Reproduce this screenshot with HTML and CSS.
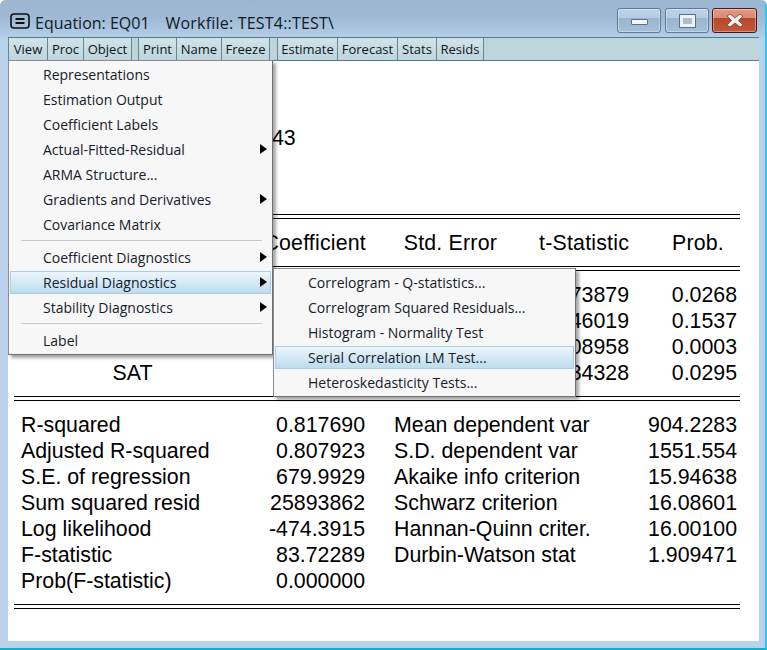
FILE: index.html
```html
<!DOCTYPE html>
<html lang="en">
<head>
<meta charset="utf-8">
<title>Equation: EQ01</title>
<link rel="stylesheet" href="styles.css">
</head>
<body>
<div class="window">
  <header class="titlebar">
    <span class="sysbtn"><svg width="20" height="16" viewBox="0 0 20 16"><rect x="1" y="1" width="18" height="14" rx="3" fill="none" stroke="#111" stroke-width="1.6"/><path d="M5.500 6h9M5.500 10h9" stroke="#111" stroke-width="2"/></svg></span>
    <span class="title">Equation: EQ01</span>
    <span class="title title-wf">Workfile: TEST4::TEST\</span>
    <div class="winbtns">
      <span class="winbtn"><span class="glyph-min"></span></span>
      <span class="winbtn"><span class="glyph-max"></span></span>
      <span class="winbtn winbtn-close"><svg width="18" height="15" viewBox="0 0 18 15"><path d="M1 3 4 1 9 5 14 1 17 3 12.500 7.500 17 12 14 14 9 10 4 14 1 12 5.500 7.500z" fill="#f4f0ee" stroke="#7d4035" stroke-width="0.8"/></svg></span>
    </div>
  </header>
  <nav class="toolbar">
    <div class="tbgroup tbgroup-view"><span class="tb">View</span><span class="tb">Proc</span><span class="tb">Object</span></div>
    <div class="tbgroup tbgroup-print"><span class="tb">Print</span><span class="tb">Name</span><span class="tb">Freeze</span></div>
    <div class="tbgroup tbgroup-est"><span class="tb">Estimate</span><span class="tb">Forecast</span><span class="tb">Stats</span><span class="tb">Resids</span></div>
  </nav>
  <main class="content">
    <p class="obs">43</p>
    <div class="rule-double rule-top"></div>
    <div class="coef-grid coef-head">
      <span></span><span>Coefficient</span><span>Std. Error</span><span>t-Statistic</span><span class="prob-head">Prob.</span>
    </div>
    <div class="rule-double"></div>
    <div class="coef-grid coef-body">
      <span></span><span></span><span></span><span>2.273879</span><span>0.0268</span>
      <span></span><span></span><span></span><span>1.446019</span><span>0.1537</span>
      <span></span><span></span><span></span><span>3.908958</span><span>0.0003</span>
      <span class="var">SAT</span><span></span><span></span><span>2.234328</span><span>0.0295</span>
    </div>
    <div class="rule-double rule-mid"></div>
    <div class="stats">
      <span>R-squared</span><span>0.817690</span><span>Mean dependent var</span><span>904.2283</span>
      <span>Adjusted R-squared</span><span>0.807923</span><span>S.D. dependent var</span><span>1551.554</span>
      <span>S.E. of regression</span><span>679.9929</span><span>Akaike info criterion</span><span>15.94638</span>
      <span>Sum squared resid</span><span>25893862</span><span>Schwarz criterion</span><span>16.08601</span>
      <span>Log likelihood</span><span>-474.3915</span><span>Hannan-Quinn criter.</span><span>16.00100</span>
      <span>F-statistic</span><span>83.72289</span><span>Durbin-Watson stat</span><span>1.909471</span>
      <span>Prob(F-statistic)</span><span>0.000000</span><span></span><span></span>
    </div>
    <div class="rule-double rule-end"></div>
  </main>

  <div class="menu menu-view">
    <div class="mi">Representations</div>
    <div class="mi">Estimation Output</div>
    <div class="mi">Coefficient Labels</div>
    <div class="mi has-sub">Actual-Fitted-Residual</div>
    <div class="mi">ARMA Structure...</div>
    <div class="mi has-sub">Gradients and Derivatives</div>
    <div class="mi">Covariance Matrix</div>
    <div class="msep"></div>
    <div class="mi has-sub">Coefficient Diagnostics</div>
    <div class="mi has-sub mi-active">Residual Diagnostics</div>
    <div class="mi has-sub">Stability Diagnostics</div>
    <div class="msep"></div>
    <div class="mi">Label</div>
  </div>
  <div class="menu menu-sub">
    <div class="mi">Correlogram - Q-statistics...</div>
    <div class="mi">Correlogram Squared Residuals...</div>
    <div class="mi">Histogram - Normality Test</div>
    <div class="mi mi-active">Serial Correlation LM Test...</div>
    <div class="mi">Heteroskedasticity Tests...</div>
  </div>
</div>
</body>
</html>
```
FILE: styles.css
```css
* { box-sizing: border-box; }
html, body { margin: 0; padding: 0; background: #fff; }
body { width: 767px; height: 650px; overflow: hidden; }

.window {
  position: relative;
  width: 767px;
  height: 650px;
  background: #b9d1ea;
  border-radius: 6px 6px 0 0;
  border-right: 2px solid #35c3e6;
  border-bottom: 2px solid #1fa9c9;
  padding: 0 6px 7px 8px;
  display: flex;
  flex-direction: column;
  font-family: "Open Sans", "Noto Sans", sans-serif;
}

.titlebar {
  margin: 0 -6px 0 -8px;
  height: 37px;
  padding: 13px 8px 0 10px;
  display: flex;
  align-items: flex-start;
  background: linear-gradient(#9cb5d0 0, #a0b9d4 50%, #b4cde8 100%);
  border-radius: 6px 6px 0 0;
  color: #0d1a26;
  font-size: 16px;
  line-height: 20px;
  flex: none;
}
.sysbtn { width: 20px; height: 16px; margin-right: 5px; display: block; }
.sysbtn svg { display: block; }
.title-wf { margin-left: 16px; letter-spacing: 0.2px; }

.winbtns { margin: -5px 0 0 auto; display: flex; gap: 4px; }
.winbtn {
  width: 44px;
  height: 25px;
  border: 1px solid #5e7a96;
  border-radius: 3px;
  display: flex;
  align-items: center;
  justify-content: center;
  background: linear-gradient(#bdd2e8 0, #b5cce4 38%, #9bb5cf 40%, #a6bfd9 100%);
  box-shadow: inset 0 0 0 1px rgba(255, 255, 255, 0.35);
}
.winbtn-close {
  width: 45px;
  margin-left: -1px;
  border-color: #4a1a1a;
  background: linear-gradient(#e39a86 0, #d98a75 38%, #b9472a 40%, #c5583a 100%);
}
.glyph-min {
  width: 17px;
  height: 6px;
  margin-top: 3px;
  background: #f3f5f8;
  border: 1px solid #5a6f88;
  border-radius: 1px;
}
.glyph-max {
  width: 15px;
  height: 12px;
  background: #a9bdd4;
  border: 3px solid #eef2f6;
  outline: 1px solid #5a6f88;
}

.toolbar {
  height: 24px;
  display: flex;
  gap: 6px;
  background: #bfd5dc;
  border-top: 1px solid #4f7b8c;
  border-bottom: 1px solid #4f7b8c;
  flex: none;
}
.tbgroup { display: grid; }
.tbgroup-view { grid-template-columns: 39px 36px 49px; }
.tbgroup-print { grid-template-columns: 38px 45px 49px; }
.tbgroup-est { grid-template-columns: 60px 60px 39px 48px; margin-left: 1px; }
.tb {
  height: 22px;
  border-left: 1px solid #5f8796;
  font-size: 13px;
  line-height: 22px;
  text-align: center;
  color: #0a1720;
  background: linear-gradient(#d2e3e8, #bfd5dc);
}
.tb:last-child { border-right: 1px solid #5f8796; }

.content {
  flex: 1;
  background: #fff;
  padding: 0 19px 0 6px;
  color: #000;
  font-family: "Liberation Sans", Arial, sans-serif;
  font-size: 21.33px;
  line-height: 26px;
}
.obs { margin: 64px 0 0; padding-left: 258px; }
.rule-double {
  height: 5px;
  border-top: 1px solid #000;
  border-bottom: 1px solid #000;
}
.rule-top { margin-top: 63px; }
.rule-mid { margin-top: 10px; }
.rule-end { margin-top: 10px; }

.coef-grid {
  display: grid;
  grid-template-columns: 224px 128px 131px 132px 108px;
  text-align: right;
}
.coef-head { padding: 11px 0 10px; letter-spacing: 0.2px; }
.prob-head { padding-right: 13px; }
.coef-body { padding-top: 11px; }
.var { text-align: center; padding-left: 13px; }

.stats {
  display: grid;
  grid-template-columns: 202px 142px 260px 112px;
  padding: 11px 0 0 7px;
}
.stats span:nth-child(even) { text-align: right; }
.stats span:nth-child(4n+3) { padding-left: 29px; }

.menu {
  position: absolute;
  background: #f7f7f7;
  border: 1px solid #8c8c8c;
  border-right-color: #6f6f6f;
  border-bottom-color: #6f6f6f;
  box-shadow: 3px 3px 3px rgba(0, 0, 0, 0.35);
  color: #15202b;
  font-size: 14px;
  padding: 1px;
}
.menu-view { left: 8px; top: 60px; width: 265px; height: 295px; }
.menu-sub { left: 273px; top: 268px; width: 303px; height: 129px; }
.mi {
  position: relative;
  height: 25px;
  line-height: 23px;
  padding-left: 32px;
  white-space: nowrap;
  border: 1px solid transparent;
}
.mi-active {
  height: 23px;
  line-height: 21px;
  margin: 1px 0;
  background: linear-gradient(#ecf6fc, #bddcee);
  border-color: #a9cfe3;
}
.has-sub::after {
  content: "";
  position: absolute;
  right: 3px;
  top: 6px;
  border-left: 7px solid #000;
  border-top: 5px solid transparent;
  border-bottom: 5px solid transparent;
}
.mi-active.has-sub::after { top: 5px; }
.msep { height: 5px; margin: 3px 9px 0 11px; border-top: 1px solid #c8c8c8; }
```
